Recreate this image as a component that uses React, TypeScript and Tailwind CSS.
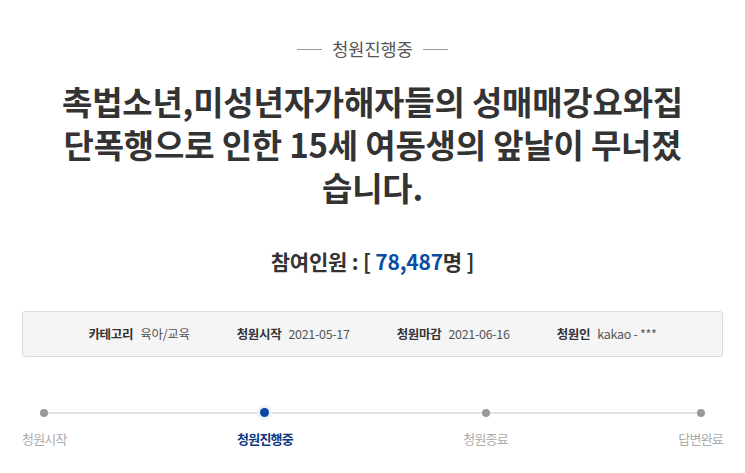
import React from 'react';

const FONT = '"Noto Sans CJK KR", "Noto Sans", sans-serif';

const INFO = [
  { label: '카테고리', value: '육아/교육' },
  { label: '청원시작', value: '2021-05-17' },
  { label: '청원마감', value: '2021-06-16' },
  { label: '청원인', value: 'kakao - ***' },
];

const STEPS = ['청원시작', '청원진행중', '청원종료', '답변완료'];
const ACTIVE = 1;

export default function App() {
  return (
    <div className="w-[745px] h-[473px] bg-white overflow-hidden" style={{ fontFamily: FONT }}>
      {/* status tag */}
      <div className="flex items-center justify-center gap-[10px] pt-[37px]">
        <span className="w-[25px] h-px bg-[#999]" />
        <span className="text-[17.5px] leading-[24px] text-[#555]">청원진행중</span>
        <span className="w-[25px] h-px bg-[#999]" />
      </div>

      {/* title */}
      <h1 className="mt-[19px] text-center text-[33px] leading-[43px] font-bold text-[#333] tracking-[-0.2px]">
        <span className="block whitespace-nowrap">촉법소년,미성년자가해자들의 성매매강요와집</span>
        <span className="block whitespace-nowrap">단폭행으로 인한 15세 여동생의 앞날이 무너졌</span>
        <span className="block whitespace-nowrap">습니다.</span>
      </h1>

      {/* participants */}
      <div className="mt-[37px] text-center text-[21px] leading-[30px] font-bold text-[#333] tracking-[-0.2px]">
        참여인원 : [ <span className="text-[#0b4da2]">78,487</span>명 ]
      </div>

      {/* info box */}
      <div className="mx-[22px] mt-[35px] h-[46px] bg-[#f5f5f5] border border-[#dcdcdc] rounded-[3px] flex items-center justify-center gap-[47px] text-[12.5px] tracking-[-0.3px]">
        {INFO.map((item) => (
          <div key={item.label} className="flex items-center gap-[7px]">
            <span className="font-bold text-[#333]">{item.label}</span>
            <span className="text-[#555]">{item.value}</span>
          </div>
        ))}
      </div>

      {/* progress */}
      <div className="relative mx-[22px] mt-[52px]">
        <div className="absolute left-[22px] right-[23px] top-[3px] h-[2px] bg-[#e2e2e2]" />
        <div className="relative flex justify-between">
          {STEPS.map((step, i) => (
            <div key={step} className="flex flex-col items-center">
              {i === ACTIVE ? (
                <span className="w-[9px] h-[9px] -mt-[1px] rounded-full bg-[#0a49a0] ring-[3px] ring-[#eef2f9]" />
              ) : (
                <span className="w-[8px] h-[8px] rounded-full bg-[#999]" />
              )}
              <span
                className={`mt-[12px] text-[13px] leading-[20px] tracking-[-0.8px] ${
                  i === ACTIVE ? 'font-bold text-[#0b3a80]' : 'text-[#aaa]'
                }`}
              >
                {step}
              </span>
            </div>
          ))}
        </div>
      </div>
    </div>
  );
}
